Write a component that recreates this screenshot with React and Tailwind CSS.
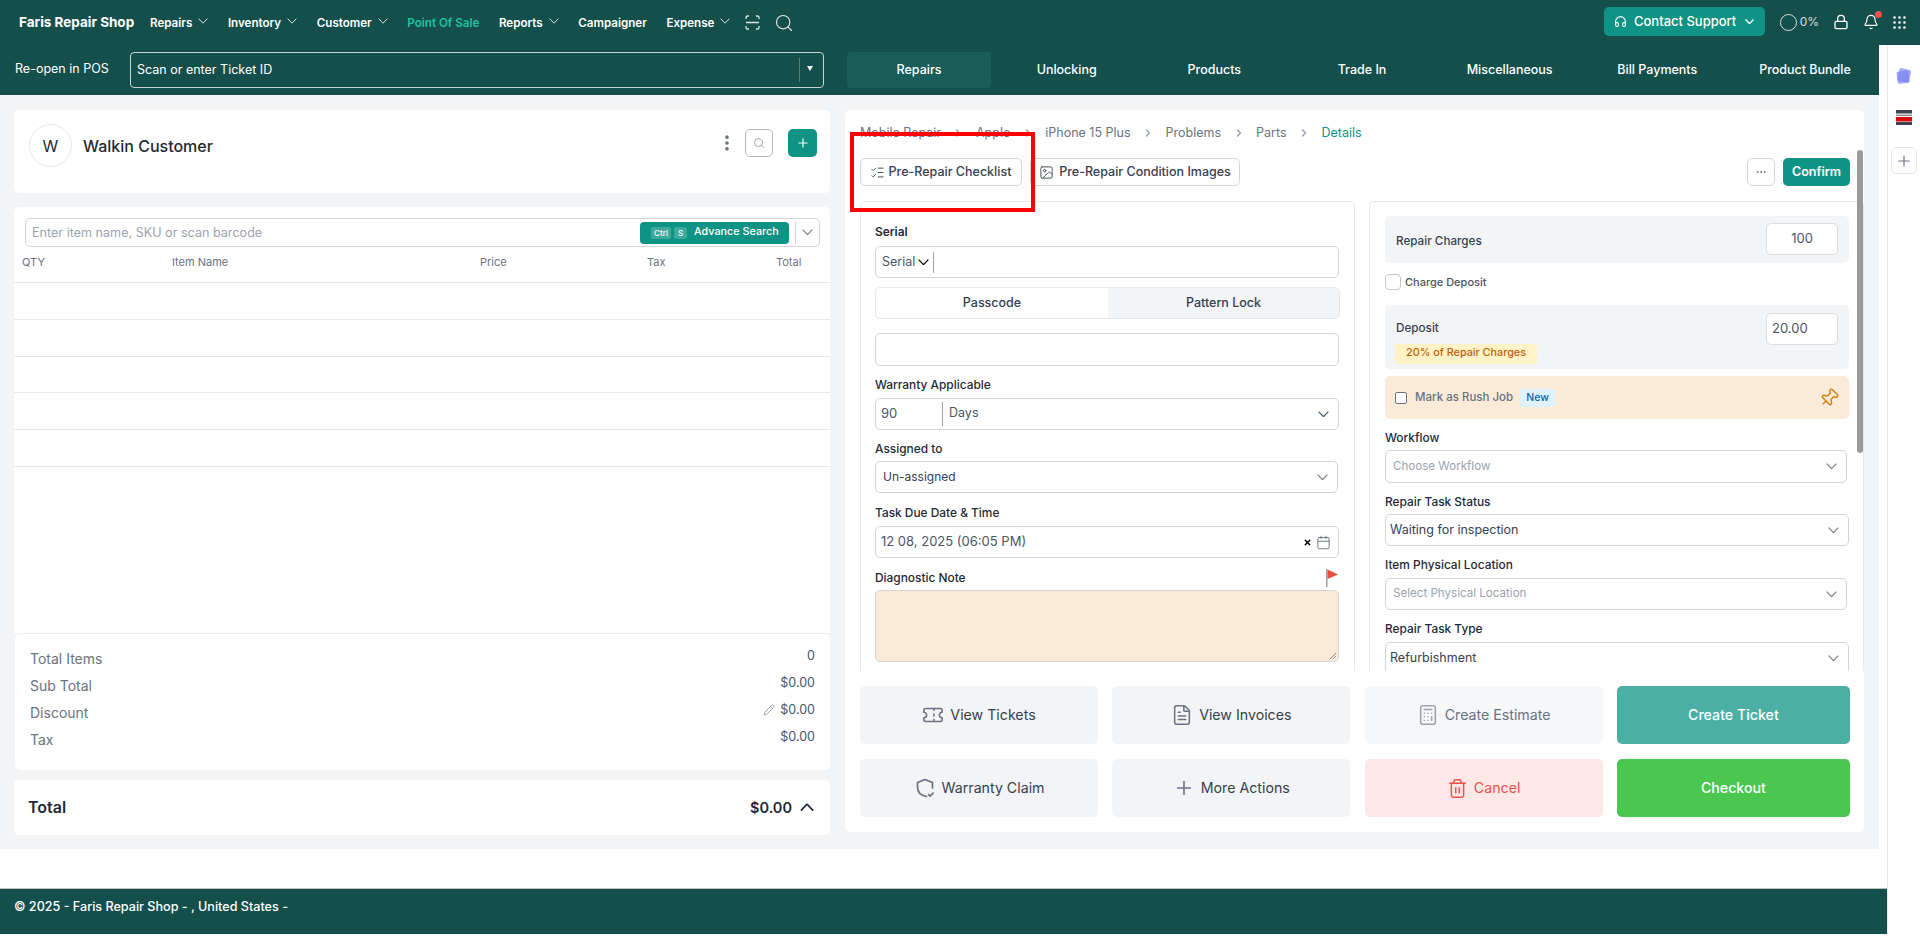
import React from 'react';
import { ChevronRight, Search, Lock, Bell, Grip, Headphones, Plus, ListChecks, Image, Ticket, FileText, Calculator, Trash2, Pin, Pencil, Calendar, X, MoreHorizontal, MoreVertical } from 'lucide-react';

function Chev({ w = 11, up = false, className = 'text-[#7b818c]', sw = 1.1 }) {
  return (
    <svg width={w} height={w * 0.6} viewBox="0 0 10 6" fill="none" stroke="currentColor" strokeWidth={sw} className={`shrink-0 ${up ? 'rotate-180' : ''} ${className}`}>
      <path d="M.6.6 5 5.2 9.4.6" />
    </svg>
  );
}

function NavItem({ label, caret = true, className = 'mt-[2px] text-white' }) {
  return (
    <div className={`flex items-center gap-[6px] whitespace-nowrap text-[11.6px] font-semibold ${className}`}>
      <span>{label}</span>
      {caret && <Chev w={10} className="-mt-[4px] text-[#d5dedd]" sw={1} />}
    </div>
  );
}

function Tab({ label, active }) {
  return (
    <div className={`flex h-[36px] items-center justify-center rounded-[4px] text-[12.5px] font-medium text-white ${active ? 'bg-[#1a5e5a]' : ''}`}>
      {label}
    </div>
  );
}

function Crumb({ label, last }) {
  return (
    <>
      <span className={last ? 'text-[#0e9384]' : 'text-[#6b7280]'}>{label}</span>
      {!last && <ChevronRight size={12} strokeWidth={3} className="mx-[11.5px] text-[#9ca3af]" />}
    </>
  );
}

function Field({ label, className = '', labelClass = 'font-medium' }) {
  return <div className={`flex h-[18px] items-center justify-between text-[11.9px] text-[#1f2937] ${labelClass} ${className}`}>{label}</div>;
}

function Select({ text, placeholder, className = '', tight }) {
  return (
    <div className={`flex items-center justify-between rounded-[5px] border border-[#d1d5db] bg-white pr-[9px] ${className}`}>
      <span className={placeholder ? 'pl-[7px] text-[11.6px] text-[#9ca3af]' : tight ? 'pl-[7px] text-[12px] text-[#374151]' : 'pl-[4px] text-[12.5px] text-[#374151]'}>{text}</span>
      <Chev />
    </div>
  );
}

function Action({ icon, label, className = 'bg-[#f3f4f6] text-[#374151]' }) {
  return (
    <div className={`flex h-[58px] items-center justify-center gap-[6px] rounded-[5px] text-[14.2px] ${className}`}>
      {icon}
      <span>{label}</span>
    </div>
  );
}

function Row({ label, value, pencil }) {
  return (
    <div className="flex h-[27px] items-start justify-between">
      <span className="text-[14px] leading-[27px] text-[#6b7280]">{label}</span>
      <span className="flex items-center gap-[5px] text-[12.5px] leading-[22px] text-[#4b5563]">
        {pencil && <Pencil size={12} strokeWidth={1.3} className="text-[#6b7280]" />}
        {value}
      </span>
    </div>
  );
}

const scanIcon = (
  <svg width="15" height="15" viewBox="0 0 15 15" fill="none" stroke="#dfe7e6" strokeWidth="1.3">
    <path d="M1 4V2.5A1.5 1.5 0 0 1 2.5 1H4M11 1h1.5A1.5 1.5 0 0 1 14 2.5V4M14 11v1.5a1.5 1.5 0 0 1-1.5 1.5H11M4 14H2.5A1.5 1.5 0 0 1 1 12.5V11M1 7.5h13" />
  </svg>
);

const shieldIcon = (
  <svg width="22" height="22" viewBox="0 0 22 22" fill="none" stroke="#6b7280" strokeWidth="1.7" strokeLinecap="round" strokeLinejoin="round">
    <path d="M12.5 19.5C7 18.5 3.5 15 3.5 10V5.5L11 2.5l7.5 3V11" />
    <path d="M14.5 17.5l1.7 1.7 3-3.2" />
  </svg>
);

export default function App() {
  return (
    <div className="relative h-[945px] w-[1920px] overflow-hidden bg-white font-[family-name:Inter,sans-serif]">
      {/* top bar */}
      <div className="flex h-[45px] items-center bg-[#154f4c] pl-[19px] text-white">
        <span className="w-[115px] whitespace-nowrap text-[13.5px] font-bold">Faris Repair Shop</span>
        <div className="ml-[16px] flex items-center gap-[19.6px]">
          <NavItem label="Repairs" />
          <NavItem label="Inventory" />
          <NavItem label="Customer" />
          <NavItem label="Point Of Sale" caret={false} className="mt-[3px] text-[#1fc2a0]" />
          <NavItem label="Reports" />
          <NavItem label="Campaigner" caret={false} className="mt-[3px] text-white" />
          <NavItem label="Expense" />
        </div>
        <div className="ml-[15px] flex items-center gap-[14px]">
          {scanIcon}
          <Search size={20} strokeWidth={1.4} className="text-[#dfe7e6]" />
        </div>
        <div className="-mt-[1px] ml-auto flex items-center">
          <div className="-mt-[1px] flex h-[29px] w-[161px] items-center justify-center gap-[7px] rounded-[5px] bg-[#0e9384] text-[13px] font-medium">
            <Headphones size={13} strokeWidth={2} />
            <span>Contact Support</span>
            <Chev w={9} className="ml-[2px] text-white" sw={1.5} />
          </div>
          <div className="ml-[15px] h-[17px] w-[17px] rounded-full border-[1.5px] border-[#d5dedd]" />
          <span className="ml-[3px] text-[12px] text-[#d5dedd]">0%</span>
          <Lock size={16} strokeWidth={2} className="ml-[14px]" />
          <div className="relative ml-[14px]">
            <Bell size={16} strokeWidth={1.7} />
            <span className="absolute -right-[3px] -top-[3px] h-[7px] w-[7px] rounded-full bg-[#f04f4f]" />
          </div>
          <Grip size={17} strokeWidth={1.7} className="ml-[12px] mr-[12px]" />
        </div>
      </div>

      <div className="flex">
        <div className="w-[1888px] border-r border-[#e5e7eb]">
          {/* second bar */}
          <div className="flex h-[50px] w-[1879px] bg-[#154f4c] pt-[7px] text-white">
            <span className="ml-[15px] mt-[8px] w-[94px] whitespace-nowrap text-[12.5px]">Re-open in POS</span>
            <div className="ml-[21px] flex h-[36px] w-[694px] items-center justify-between rounded-[4px] border border-[#c9d3d2] pl-[6px] pr-[10px]">
              <span className="text-[12.5px]">Scan or enter Ticket ID</span>
              <div className="flex h-[24px] items-center border-l border-[#5b7f7c] pl-[7px]">
                <span className="-mt-[3px] h-0 w-0 border-x-[3px] border-t-[5px] border-x-transparent border-t-white" />
              </div>
            </div>
            <div className="ml-[23px] grid w-[1030px] grid-cols-7 gap-x-[3.6px]">
              <Tab label="Repairs" active />
              <Tab label="Unlocking" />
              <Tab label="Products" />
              <Tab label="Trade In" />
              <Tab label="Miscellaneous" />
              <Tab label="Bill Payments" />
              <Tab label="Product Bundle" />
            </div>
          </div>

          {/* body */}
          <div className="flex h-[754px] w-[1879px] gap-[15px] bg-[#f3f4f6] pl-[14px] pt-[15px]">
            {/* left column */}
            <div className="w-[816px]">
              <div className="flex h-[83px] items-start justify-between rounded-[5px] bg-white pl-[15px] pr-[13px] pt-[14px]">
                <div className="flex items-center gap-[11px]">
                  <div className="flex h-[43px] w-[43px] items-center justify-center rounded-full border border-[#e5e7eb] text-[16px] text-[#1f2937]">W</div>
                  <span className="text-[16px] font-medium text-[#1f2937]">Walkin Customer</span>
                </div>
                <div className="mt-[5px] flex items-center">
                  <MoreVertical size={20} strokeWidth={2.4} className="text-[#6b7280]" />
                  <div className="ml-[8px] flex h-[28px] w-[28px] items-center justify-center rounded-[5px] border border-[#b5b8bd]">
                    <Search size={12} strokeWidth={1.6} className="text-[#8a8f98]" />
                  </div>
                  <div className="ml-[15px] flex h-[28px] w-[29px] items-center justify-center rounded-[5px] bg-[#0e9384] text-white">
                    <Plus size={14} strokeWidth={2} />
                  </div>
                </div>
              </div>

              <div className="mt-[14px] h-[426px] rounded-t-[5px] bg-white pt-[11px]">
                <div className="mx-[11px] flex h-[29px] w-[795px] items-center rounded-[5px] border border-[#d1d5db] pl-[6px]">
                  <span className="mt-[1px] text-[12.6px] text-[#9ca3af]">Enter item name, SKU or scan barcode</span>
                  <div className="ml-auto flex h-[22px] w-[149px] items-center rounded-[4px] bg-[#0e9384] pl-[11px] text-white">
                    <span className="flex h-[12px] w-[20px] items-center justify-center rounded-[2px] bg-[#3ba99c] text-[8px] font-medium">Ctrl</span>
                    <span className="ml-[3px] flex h-[12px] w-[13px] items-center justify-center rounded-[2px] bg-[#3ba99c] text-[8px] font-medium">S</span>
                    <span className="ml-[7px] whitespace-nowrap text-[10.8px] font-medium">Advance Search</span>
                  </div>
                  <div className="ml-[6px] flex h-[22px] w-[24px] items-center justify-center border-l border-[#d1d5db]">
                    <Chev />
                  </div>
                </div>
                <div className="grid h-[36.4px] grid-cols-[150px_308px_167px_129px_1fr] items-center border-b border-[#e5e7eb] pb-[4px] pl-[8px] pr-[29px] text-[11px] text-[#6b7280]">
                  <span>QTY</span>
                  <span>Item Name</span>
                  <span>Price</span>
                  <span>Tax</span>
                  <span className="justify-self-end whitespace-nowrap">Total</span>
                </div>
                <div className="h-[36.7px] border-b border-[#e5e7eb]" />
                <div className="h-[36.7px] border-b border-[#e5e7eb]" />
                <div className="h-[36.7px] border-b border-[#e5e7eb]" />
                <div className="h-[36.7px] border-b border-[#e5e7eb]" />
                <div className="h-[36.7px] border-b border-[#e5e7eb]" />
              </div>

              <div className="ml-[1px] h-[137px] rounded-[5px] border-t border-[#eceef0] bg-white pl-[15px] pr-[15px] pt-[11px]">
                <Row label="Total Items" value="0" />
                <Row label="Sub Total" value="$0.00" />
                <Row label="Discount" value="$0.00" pencil />
                <Row label="Tax" value="$0.00" />
              </div>

              <div className="mt-[10px] flex h-[55px] items-center justify-between rounded-[5px] bg-white pl-[14px] pr-[16px] text-[#1f2937]">
                <span className="-mt-[1px] text-[16px] font-semibold">Total</span>
                <span className="flex items-center gap-[8px] text-[14.5px] font-semibold">
                  $0.00
                  <Chev w={14} up sw={1.2} className="text-[#1f2937]" />
                </span>
              </div>
            </div>

            {/* right card */}
            <div className="relative h-[722px] w-[1019px] rounded-[5px] bg-white pt-[14px]">
              <div className="flex h-[18px] items-center pl-[15px] text-[12.5px]">
                <Crumb label="Mobile Repair" />
                <Crumb label="Apple" />
                <Crumb label="iPhone 15 Plus" />
                <Crumb label="Problems" />
                <Crumb label="Parts" />
                <Crumb label="Details" last />
              </div>
              <div className="mt-[16px] flex h-[28px] items-center pl-[15px] pr-[14px] text-[12.5px] font-medium text-[#374151]">
                <div className="flex h-[28px] w-[162px] items-center justify-center gap-[4px] rounded-[5px] border border-[#d1d5db] pr-[1px]">
                  <ListChecks size={15} strokeWidth={1.6} className="text-[#4b5563]" />
                  Pre-Repair Checklist
                </div>
                <div className="ml-[8px] flex h-[28px] w-[210px] items-center justify-center gap-[5px] rounded-[5px] border border-[#d1d5db]">
                  <Image size={15} strokeWidth={1.6} className="text-[#4b5563]" />
                  Pre-Repair Condition Images
                </div>
                <div className="ml-auto flex h-[28px] w-[28px] items-center justify-center rounded-[5px] border border-[#d1d5db]">
                  <MoreHorizontal size={12} strokeWidth={2} className="text-[#6b7280]" />
                </div>
                <div className="ml-[8px] flex h-[28px] w-[67px] items-center justify-center rounded-[5px] bg-[#0e9384] font-semibold text-white">Confirm</div>
              </div>

              <div className="mt-[15px] flex h-[470px] gap-[14px] overflow-hidden pl-[15px]">
                {/* form left */}
                <div className="h-[520px] w-[495px] rounded-[5px] border border-[#e5e7eb] px-[14px] pt-[21px]">
                  <Field label="Serial" labelClass="font-semibold" />
                  <div className="mt-[5px] flex h-[32px] w-[464px] items-center rounded-[5px] border border-[#d1d5db] pl-[6px]">
                    <span className="text-[12.5px] text-[#4b5563]">Serial</span>
                    <Chev className="ml-[3px]" />
                    <span className="ml-[4px] h-[21px] border-l border-[#9ca3af]" />
                  </div>
                  <div className="mt-[9px] flex h-[32px] w-[465px] overflow-hidden rounded-[5px] border border-[#e5e7eb] text-[12.5px] font-medium text-[#374151]">
                    <div className="flex w-[232px] items-center justify-center">Passcode</div>
                    <div className="flex flex-1 items-center justify-center bg-[#f3f4f6]">Pattern Lock</div>
                  </div>
                  <div className="mt-[14px] h-[33px] w-[464px] rounded-[5px] border border-[#d1d5db]" />
                  <Field label="Warranty Applicable" className="mt-[10px]" />
                  <div className="mt-[4px] flex h-[32px] w-[464px] items-center rounded-[5px] border border-[#d1d5db] pr-[9px] text-[13px] text-[#4b5563]">
                    <span className="w-[66px] pl-[5px]">90</span>
                    <span className="-mt-[1px] flex h-[24px] items-center border-l border-[#9ca3af] pl-[6px] text-[12.5px]">Days</span>
                    <Chev className="ml-auto" />
                  </div>
                  <Field label="Assigned to" className="mt-[10px]" />
                  <Select text="Un-assigned" tight className="mt-[3px] h-[32px] w-[463px]" />
                  <Field label="Task Due Date &amp; Time" className="mt-[11px]" />
                  <div className="mt-[4px] flex h-[32px] w-[464px] items-center rounded-[5px] border border-[#d1d5db] pl-[5px] pr-[7px] text-[13px] text-[#4b5563]">
                    <span>12 08, 2025 (06:05 PM)</span>
                    <X size={9} strokeWidth={4} className="ml-auto text-black" />
                    <Calendar size={15} strokeWidth={1.5} className="ml-[4px] text-[#6b7280]" />
                  </div>
                  <div className="relative mt-[11px] flex h-[18px] items-center text-[11.9px] font-medium text-[#1f2937]">
                    Diagnostic Note
                    <svg width="13" height="19" viewBox="0 0 13 19" className="absolute right-[1px] top-0">
                      <rect x="0" y="0" width="1.5" height="18" fill="#9ca3af" />
                      <path d="M1.5 0.5 L12 5.5 L1.5 10 Z" fill="#e74c3c" />
                    </svg>
                  </div>
                  <div className="relative mt-[3px] h-[72px] w-[464px] rounded-[5px] border border-[#d1d5db] bg-[#faead8]">
                    <svg width="8" height="8" viewBox="0 0 8 8" className="absolute bottom-[1px] right-[1px]" stroke="#777" strokeWidth="0.8">
                      <path d="M1 7 7 1M4 7 7 4" />
                    </svg>
                  </div>
                </div>

                {/* form right */}
                <div className="h-[520px] w-[495px] rounded-[5px] border border-[#e5e7eb] pl-[15px] pr-[14px] pt-[14px]">
                  <div className="flex h-[47px] items-start justify-between rounded-[5px] bg-[#f3f4f6] pl-[11px] pr-[11px] pt-[7px]">
                    <span className="mt-[10px] text-[11.7px] font-medium text-[#374151]">Repair Charges</span>
                    <div className="flex h-[32px] w-[72px] items-center justify-center rounded-[5px] border border-[#d9dce1] bg-white text-[13px] text-[#4b5563]">100</div>
                  </div>
                  <div className="mt-[11px] flex h-[16px] items-center gap-[4px]">
                    <span className="h-[16px] w-[16px] rounded-[4px] border border-[#c3c7cd]" />
                    <span className="text-[11px] font-medium text-[#4b5563]">Charge Deposit</span>
                  </div>
                  <div className="mt-[15px] flex h-[64px] items-start justify-between rounded-[5px] bg-[#f3f4f6] pl-[10px] pr-[11px] pt-[8px]">
                    <div>
                      <div className="ml-[1px] mt-[7px] text-[11.7px] font-medium text-[#374151]">Deposit</div>
                      <div className="mt-[6px] flex h-[20px] w-[142px] items-center justify-center rounded-[3px] bg-[#fef3c7] text-[10.8px] font-medium text-[#c2610c]">20% of Repair Charges</div>
                    </div>
                    <div className="flex h-[32px] w-[72px] items-center rounded-[5px] border border-[#d9dce1] bg-white pl-[5px] text-[13px] text-[#4b5563]">20.00</div>
                  </div>
                  <div className="mt-[7px] flex h-[43px] items-center rounded-[5px] bg-[#faead8] pl-[10px] pr-[10px]">
                    <span className="h-[12px] w-[12px] rounded-[2px] border border-[#6b7280] bg-white" />
                    <span className="ml-[8px] text-[11.5px] font-medium text-[#6b7280]">Mark as Rush Job</span>
                    <span className="ml-[7px] flex h-[18px] w-[35px] items-center justify-center rounded-[3px] bg-[#e0f2fe] text-[10.5px] font-medium text-[#0369a1]">New</span>
                    <Pin size={20} strokeWidth={1.6} className="ml-auto rotate-45 text-[#d97706]" />
                  </div>
                  <Field label="Workflow" className="mt-[10px]" />
                  <Select text="Choose Workflow" placeholder className="mt-[3px] h-[33px] w-[462px]" />
                  <Field label="Repair Task Status" className="mt-[10px]" />
                  <Select text="Waiting for inspection" className="mt-[3px] h-[32px] w-[464px]" />
                  <Field label="Item Physical Location" className="mt-[10px]" />
                  <Select text="Select Physical Location" placeholder className="mt-[4px] h-[32px] w-[462px]" />
                  <Field label="Repair Task Type" className="mt-[10px]" />
                  <Select text="Refurbishment" className="mt-[4px] h-[32px] w-[464px]" />
                </div>
              </div>

              <div className="grid grid-cols-[238px_238px_238px_233px] gap-x-[14.3px] gap-y-[15px] pl-[15px] pt-[15px]">
                <Action icon={<Ticket size={22} strokeWidth={1.7} className="text-[#6b7280]" />} label="View Tickets" />
                <Action icon={<FileText size={22} strokeWidth={1.7} className="text-[#6b7280]" />} label="View Invoices" />
                <Action icon={<Calculator size={22} strokeWidth={1.7} className="text-[#9ca3af]" />} label="Create Estimate" className="bg-[#f6f7f9] text-[#6b7280]" />
                <Action label="Create Ticket" className="bg-[#4bafa3] font-medium text-white" />
                <Action icon={shieldIcon} label="Warranty Claim" />
                <Action icon={<Plus size={22} strokeWidth={1.7} className="text-[#6b7280]" />} label="More Actions" />
                <Action icon={<Trash2 size={21} strokeWidth={1.7} className="text-[#ef5350]" />} label="Cancel" className="bg-[#fde8e8] text-[#ef5350]" />
                <Action label="Checkout" className="bg-[#4bc750] font-medium text-white" />
              </div>

              {/* scrollbar */}
              <div className="absolute right-[1px] top-[40px] h-[303px] w-[6px] rounded-full bg-[#9a9a9a]" />
            </div>
          </div>

          {/* footer */}
          <div className="mt-[39px] h-[46px] border-t border-[#bdbdbd] bg-[#154f4c] pl-[14px] pt-[9px] text-[12.6px] font-medium text-white">
            © 2025 - Faris Repair Shop - , United States -
          </div>
        </div>

        {/* side rail */}
        <div className="flex flex-1 flex-col items-center pt-[22px]">
          <svg width="18" height="18" viewBox="0 0 18 18">
            <rect x="3" y="2" width="12" height="13" rx="1.5" fill="#8b93f8" opacity="0.8" transform="rotate(14 9 9)" />
            <rect x="2" y="4" width="12" height="12" rx="1.5" fill="#7c85f5" opacity="0.7" transform="rotate(-8 9 9)" />
          </svg>
          <svg width="16" height="15" viewBox="0 0 16 15" className="mt-[25px]">
            <rect x="0" y="0" width="16" height="3.5" fill="#3f4452" />
            <rect x="0" y="4.5" width="16" height="1.5" fill="#8a8d96" />
            <rect x="0" y="7" width="16" height="4.5" fill="#e0040f" />
            <rect x="0" y="12" width="16" height="3" fill="#3f4452" />
          </svg>
          <div className="mt-[22px] flex h-[27px] w-[26px] items-center justify-center rounded-[5px] border border-[#e5e7eb]">
            <Plus size={18} strokeWidth={1.5} className="text-[#6b7280]" />
          </div>
        </div>
      </div>

      {/* annotation */}
      <div className="absolute left-[850px] top-[132px] h-[80px] w-[185px] border-[4px] border-[#ff0000]" />
    </div>
  );
}
